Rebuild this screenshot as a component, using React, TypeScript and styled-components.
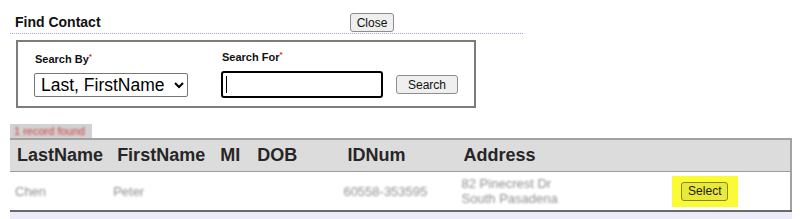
import React from 'react';
import styled, { createGlobalStyle } from 'styled-components';

const GlobalStyle = createGlobalStyle`
  body {
    margin: 0;
    background: #fff;
    font-family: "Liberation Sans", Arial, sans-serif;
    color: #000;
  }
`;

interface ContactRow {
  lastName: string;
  firstName: string;
  mi: string;
  dob: string;
  idNum: string;
  address: string[];
}

const rows: ContactRow[] = [
  {
    lastName: 'Chen',
    firstName: 'Peter',
    mi: '',
    dob: '',
    idNum: '60558-353595',
    address: ['82 Pinecrest Dr', 'South Pasadena'],
  },
];

const columns = [
  { label: 'LastName', width: 100 },
  { label: 'FirstName', width: 103 },
  { label: 'MI', width: 37 },
  { label: 'DOB', width: 90 },
  { label: 'IDNum', width: 116 },
  { label: 'Address', width: 200 },
  { label: '', width: 134 },
];

const App = () => {
  return (
    <Page>
      <GlobalStyle />
      <TitleBar>
        <Title>Find Contact</Title>
        <NativeButton $width={44}>Close</NativeButton>
      </TitleBar>

      <SearchBox>
        <Field $offset={1}>
          <FieldLabel>
            Search By<Required>*</Required>
          </FieldLabel>
          <SearchSelect defaultValue="last">
            <option value="last">Last, FirstName</option>
            <option value="id">IDNum</option>
          </SearchSelect>
        </Field>
        <Field $offset={0}>
          <FieldLabel>
            Search For<Required>*</Required>
          </FieldLabel>
          <InputWrap>
            <SearchInput type="text" />
            <Caret />
          </InputWrap>
        </Field>
        <SearchButtonWrap>
          <NativeButton $width={62}>Search</NativeButton>
        </SearchButtonWrap>
      </SearchBox>

      <ResultTag>
        <Blurred $color="#d23c3c">1 record found</Blurred>
      </ResultTag>

      <ResultTable>
        <colgroup>
          {columns.map((c, i) => (
            <col key={i} style={{ width: c.width }} />
          ))}
        </colgroup>
        <thead>
          <tr>
            {columns.map((c, i) => (
              <HeadCell key={i}>{c.label}</HeadCell>
            ))}
          </tr>
        </thead>
        <tbody>
          {rows.map((r) => (
            <tr key={r.idNum}>
              <BodyCell $pad={5}>
                <Blurred>{r.lastName}</Blurred>
              </BodyCell>
              <BodyCell $pad={3}>
                <Blurred>{r.firstName}</Blurred>
              </BodyCell>
              <BodyCell $pad={4}>{r.mi}</BodyCell>
              <BodyCell $pad={4}>{r.dob}</BodyCell>
              <BodyCell $pad={3}>
                <Blurred>{r.idNum}</Blurred>
              </BodyCell>
              <BodyCell $pad={5}>
                {r.address.map((line) => (
                  <AddressLine key={line}>
                    <Blurred>{line}</Blurred>
                  </AddressLine>
                ))}
              </BodyCell>
              <BodyCell $pad={15}>
                <Highlight>
                  <SelectButton>Select</SelectButton>
                </Highlight>
              </BodyCell>
            </tr>
          ))}
        </tbody>
      </ResultTable>
      <Footer />
    </Page>
  );
};

export default App;

const Page = styled.div`
  padding: 13px 8px 0 10px;
  width: 782px;
`;

const TitleBar = styled.div`
  display: flex;
  align-items: center;
  width: 513px;
  height: 19px;
  padding-bottom: 1px;
  border-bottom: 1px dotted #a99fe0;
`;

const Title = styled.div`
  width: 335px;
  padding-left: 5px;
  font-size: 14px;
  font-weight: 700;
  line-height: 19px;
  color: #111;
`;

const NativeButton = styled.button<{ $width: number }>`
  width: ${(p) => p.$width}px;
  height: 19px;
  padding: 0;
  border: 1px solid #8d8d8d;
  border-radius: 3px;
  background: #efefef;
  font-family: "Liberation Sans", Arial, sans-serif;
  font-size: 12px;
  color: #111;
`;

const SearchBox = styled.div`
  display: flex;
  align-items: flex-end;
  box-sizing: border-box;
  width: 460px;
  height: 68px;
  margin: 6px 0 0 6px;
  padding: 0 0 8px 16px;
  border: 2px solid #7c7c7c;
`;

const Field = styled.div<{ $offset: number }>`
  display: flex;
  flex-direction: column;
  gap: 7px;
  margin-bottom: ${(p) => p.$offset}px;
  margin-right: 33px;
  &:nth-child(2) {
    margin-right: 13px;
  }
`;

const FieldLabel = styled.label`
  padding-left: 1px;
  font-size: 11px;
  font-weight: 700;
  line-height: 13px;
  color: #111;
`;

const Required = styled.sup`
  color: #e02020;
  font-size: 8px;
  line-height: 0;
  vertical-align: 4px;
`;

const SearchSelect = styled.select`
  box-sizing: border-box;
  width: 154px;
  height: 24px;
  padding: 0 0 0 2px;
  border: 1px solid #767676;
  border-radius: 2px;
  background: #fff;
  font-family: "Liberation Sans", Arial, sans-serif;
  font-size: 17.5px;
  color: #000;
`;

const InputWrap = styled.div`
  position: relative;
`;

const SearchInput = styled.input`
  display: block;
  box-sizing: border-box;
  width: 162px;
  height: 27px;
  border: 2px solid #000;
  border-radius: 3px;
  outline: none;
  background: #fff;
`;

const Caret = styled.span`
  position: absolute;
  left: 5px;
  top: 5px;
  width: 1px;
  height: 17px;
  background: #000;
`;

const SearchButtonWrap = styled.div`
  margin-bottom: 4px;
`;

const ResultTag = styled.div`
  display: inline-block;
  margin-top: 16px;
  width: 82px;
  height: 14px;
  box-sizing: border-box;
  padding: 1px 0 0 4px;
  background: #d2d2d2;
  font-size: 11px;
  line-height: 12px;
  vertical-align: top;
`;

const Blurred = styled.span<{ $color?: string }>`
  display: inline-block;
  color: ${(p) => p.$color || '#8f8f8f'};
  filter: blur(1.1px);
`;

const ResultTable = styled.table`
  display: table;
  width: 782px;
  table-layout: fixed;
  border-collapse: collapse;
  border-top: 2px solid #a2a2a2;
  border-right: 2px solid #a2a2a2;
  border-bottom: 2px solid #6a6a6a;
`;

const HeadCell = styled.th`
  height: 31px;
  padding: 0 0 0 7px;
  background: #dcdcdc;
  border-bottom: 1px solid #9d9d9d;
  text-align: left;
  font-size: 18px;
  font-weight: 700;
  color: #262626;
  white-space: nowrap;
`;

const BodyCell = styled.td<{ $pad: number }>`
  height: 38px;
  padding: 0 0 0 ${(p) => p.$pad}px;
  background: #fff;
  font-size: 13px;
  line-height: 15px;
  vertical-align: middle;
  white-space: nowrap;
`;

const AddressLine = styled.div`
  line-height: 15px;
`;

const Highlight = styled.div`
  display: flex;
  align-items: center;
  justify-content: center;
  width: 66px;
  height: 31px;
  background: #fbfb35;
`;

const SelectButton = styled.button`
  width: 47px;
  height: 19px;
  padding: 0;
  border: 1px solid #86862e;
  border-radius: 3px;
  background: #e9e93a;
  font-family: "Liberation Sans", Arial, sans-serif;
  font-size: 12px;
  color: #1a1a10;
`;

const Footer = styled.div`
  width: 782px;
  height: 10px;
  background: #ececf8;
`;
